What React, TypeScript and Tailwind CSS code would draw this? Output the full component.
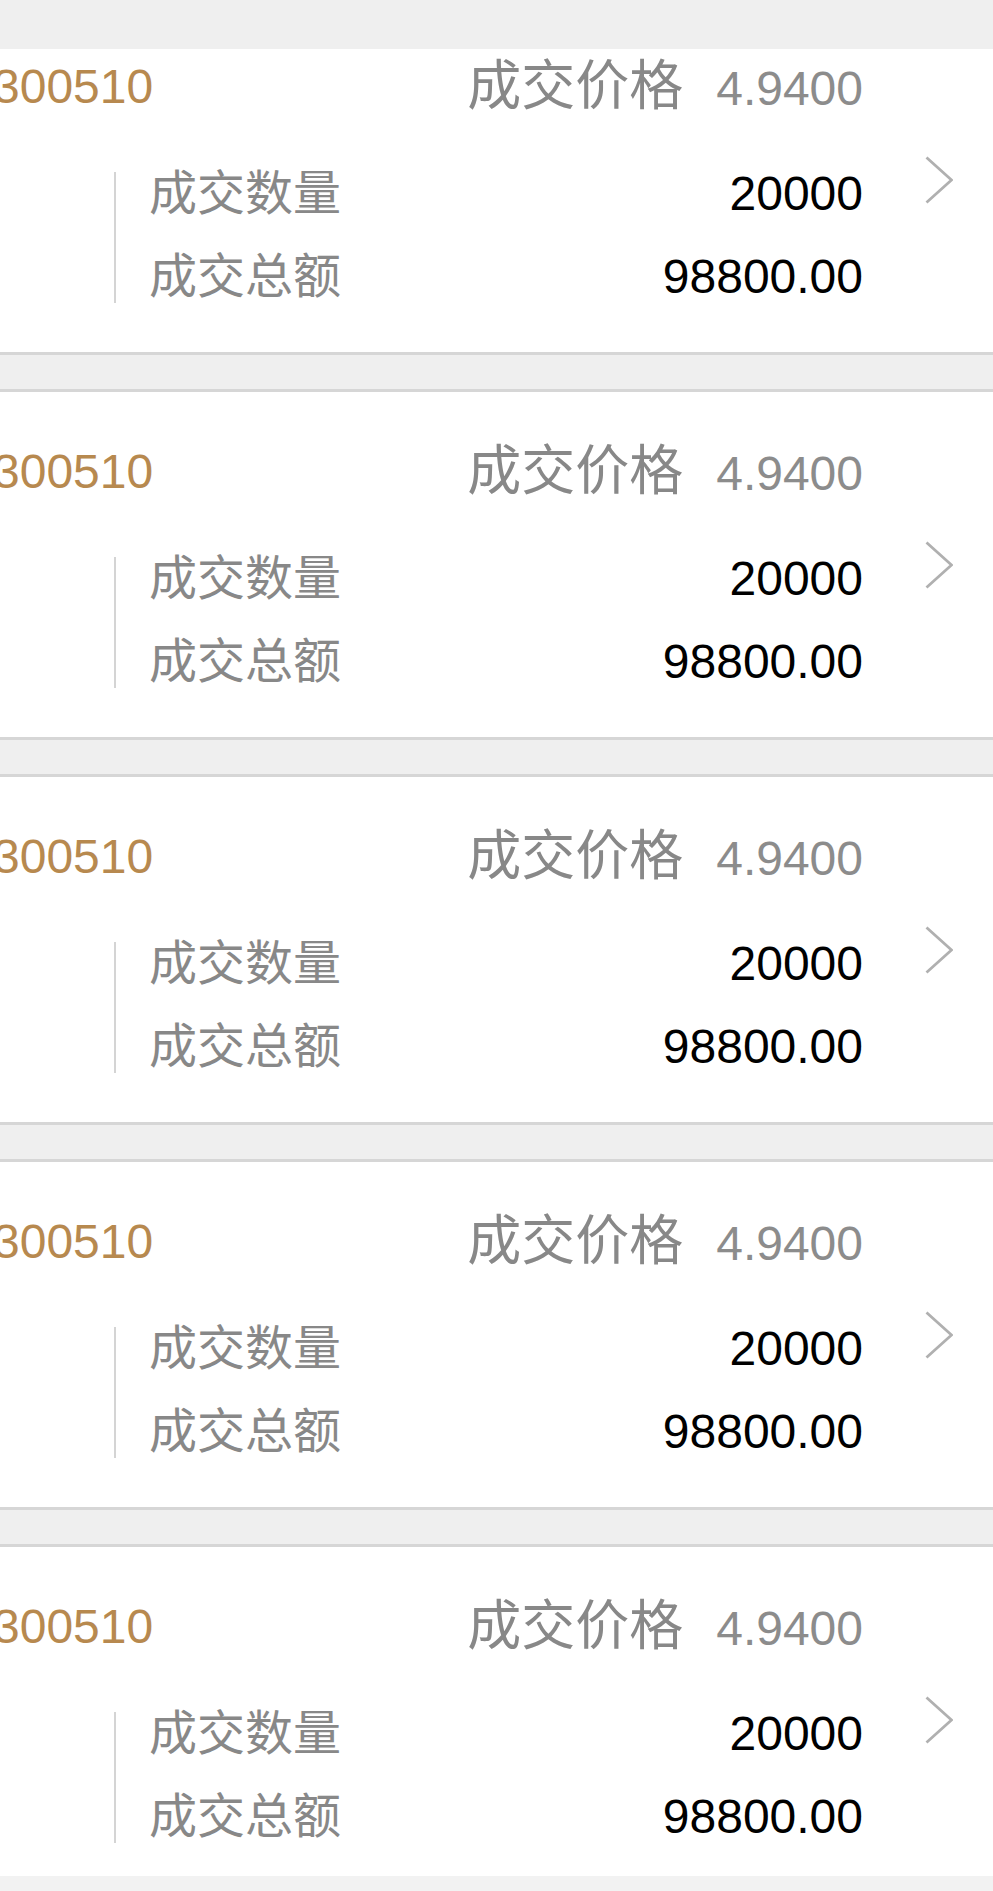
const TRADES = [
  { code: '300510', price: '4.9400', volume: '20000', amount: '98800.00' },
  { code: '300510', price: '4.9400', volume: '20000', amount: '98800.00' },
  { code: '300510', price: '4.9400', volume: '20000', amount: '98800.00' },
  { code: '300510', price: '4.9400', volume: '20000', amount: '98800.00' },
  { code: '300510', price: '4.9400', volume: '20000', amount: '98800.00' },
]

type Trade = (typeof TRADES)[number]

function Chevron() {
  return (
    <svg width="28" height="48" viewBox="0 0 28 48" fill="none">
      <polyline
        points="1.5,1.5 26.5,24 1.5,46.5"
        stroke="#b0b0b0"
        strokeWidth="2.8"
        strokeLinejoin="miter"
      />
    </svg>
  )
}

function TradeCard({ trade, first }: { trade: Trade; first: boolean }) {
  return (
    <div
      className={`flex h-[345px] bg-white border-b-[3px] border-[#d6d6d6] box-content ${
        first ? '' : 'border-t-[3px] mt-[34px]'
      }`}
    >
      <div className="flex-1 min-w-0">
        {/* Code + price */}
        <div className="flex items-center h-[160px]">
          <span className="ml-[-7px] text-[48px] leading-none text-[#b7894f]">{trade.code}</span>
          <div className="ml-auto flex items-baseline mt-[-3px]">
            <span className="text-[54px] leading-none text-[#888888]">成交价格</span>
            <span className="ml-[33px] text-[48px] leading-none text-[#8c8c8c]">{trade.price}</span>
          </div>
        </div>

        {/* Details */}
        <div className="mt-[5px] ml-[114px] border-l-2 border-[#d4d4d4] pl-[33px] pb-[5px] flex flex-col gap-[40px]">
          <div className="flex items-center justify-between h-[43px]">
            <span className="text-[48px] leading-none text-[#888888]">成交数量</span>
            <span className="text-[48px] leading-none text-black">{trade.volume}</span>
          </div>
          <div className="flex items-center justify-between h-[43px]">
            <span className="text-[48px] leading-none text-[#888888]">成交总额</span>
            <span className="text-[48px] leading-none text-black">{trade.amount}</span>
          </div>
        </div>
      </div>

      <div className="flex items-center pl-[62px] pr-[40px]">
        <Chevron />
      </div>
    </div>
  )
}

export default function App() {
  return (
    <div
      className="w-[993px] h-[1891px] flex flex-col bg-[#efefef] overflow-hidden"
      style={{ fontFamily: '"Liberation Sans", "Noto Sans CJK SC", sans-serif' }}
    >
      <div className="h-[49px] shrink-0 bg-[#efefef]" />
      <div className="flex-1 min-h-0 overflow-hidden">
        <div className="mt-[-42px]">
          {TRADES.map((t, i) => (
            <TradeCard key={i} trade={t} first={i === 0} />
          ))}
        </div>
      </div>
      <div className="h-[15px] shrink-0 bg-[#f2f2f2]" />
    </div>
  )
}
